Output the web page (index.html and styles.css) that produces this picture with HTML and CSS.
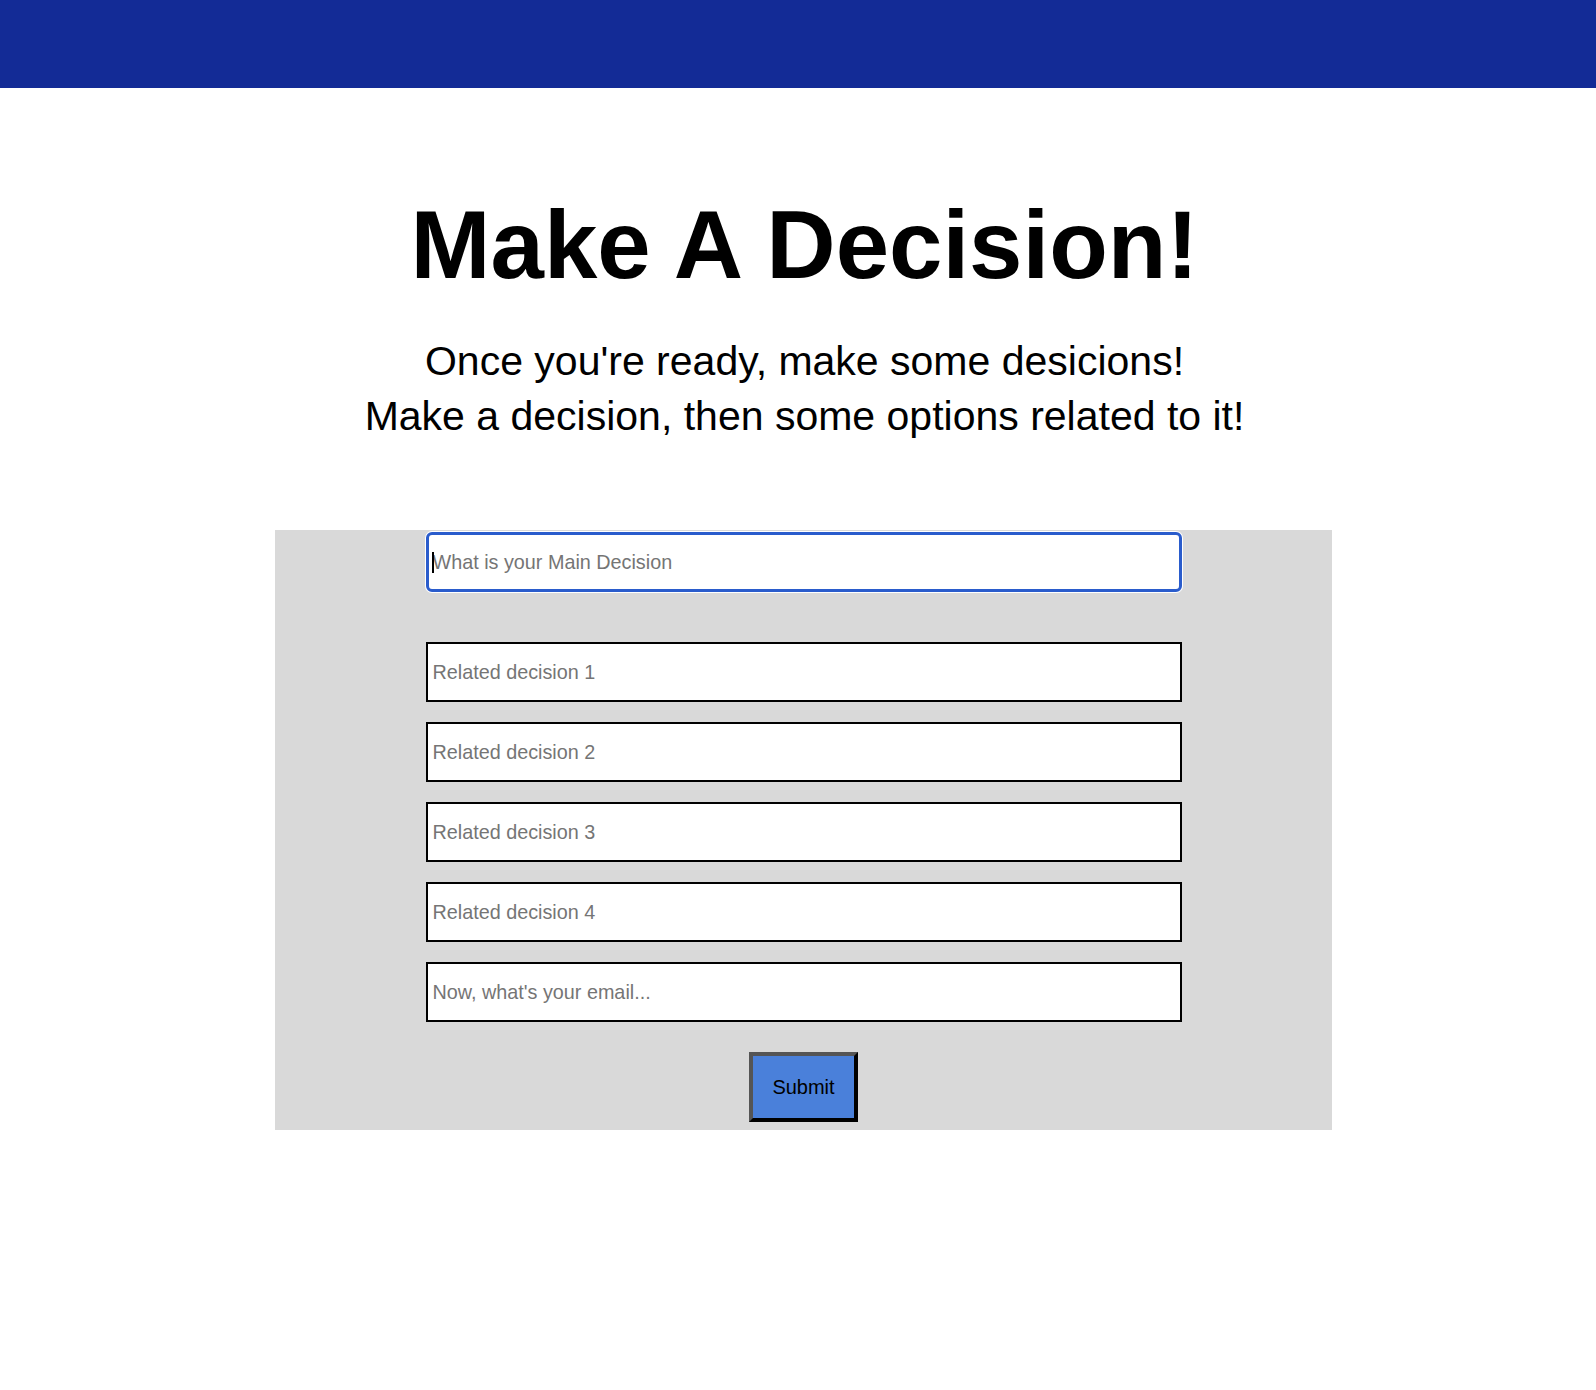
FILE: index.html
```html
<!DOCTYPE html>
<html lang="en">
<head>
<meta charset="utf-8">
<title>Make A Decision!</title>
<link rel="stylesheet" href="styles.css">
</head>
<body>
<header class="topbar"></header>
<main class="page">
  <h1 class="title">Make A Decision!</h1>
  <p class="lead">Once you're ready, make some desicions!<br>Make a decision, then some options related to it!</p>
  <form class="panel">
    <div class="field-wrap">
      <input class="field field-main" type="text" placeholder="What is your Main Decision">
    </div>
    <input class="field" type="text" placeholder="Related decision 1">
    <input class="field" type="text" placeholder="Related decision 2">
    <input class="field" type="text" placeholder="Related decision 3">
    <input class="field" type="text" placeholder="Related decision 4">
    <input class="field field-email" type="email" placeholder="Now, what's your email...">
    <button class="submit" type="button">Submit</button>
  </form>
</main>
</body>
</html>
```
FILE: styles.css
```css
html, body {
  margin: 0;
  padding: 0;
  background: #ffffff;
}

body {
  font-family: "Liberation Sans", Arial, Helvetica, sans-serif;
  color: #000000;
}

.topbar {
  height: 88px;
  background: #132b96;
}

.page {
  padding-left: 13px;
  display: flex;
  flex-direction: column;
  align-items: center;
}

.title {
  margin: 102px 0 0;
  font-size: 96px;
  line-height: 110px;
  font-weight: 700;
  text-align: center;
}

.lead {
  margin: 34px 0 0;
  font-size: 41px;
  line-height: 55px;
  font-weight: 400;
  text-align: center;
}

.panel {
  margin: 86px 2px 0 0;
  width: 1057px;
  box-sizing: border-box;
  padding: 2px 0 8px;
  background: #d9d9d9;
  display: flex;
  flex-direction: column;
  align-items: center;
}

.field-wrap {
  position: relative;
  margin-bottom: 50px;
}

.field-wrap::after {
  content: "";
  position: absolute;
  left: 6px;
  top: 20px;
  width: 2px;
  height: 21px;
  background: #000000;
}

.field {
  display: block;
  width: 756px;
  height: 60px;
  box-sizing: border-box;
  margin: 0 0 20px;
  padding: 0 5px;
  border: 2px solid #000000;
  border-radius: 0;
  background: #ffffff;
  font-family: "Liberation Sans", Arial, Helvetica, sans-serif;
  font-size: 19.8px;
  color: #000000;
  outline: none;
}

.field::placeholder {
  color: #757575;
  opacity: 1;
}

.field-main {
  margin: 0;
  padding: 0 4px;
  border: 3px solid #2a5ccc;
  border-radius: 6px;
  box-shadow: 0 0 0 1px #ffffff;
}

.field-email {
  margin-bottom: 30px;
}

.submit {
  width: 109px;
  height: 70px;
  box-sizing: border-box;
  padding: 0;
  background: #4a80da;
  border-style: solid;
  border-width: 4px;
  border-color: #555555 #000000 #000000 #555555;
  font-family: "Liberation Sans", Arial, Helvetica, sans-serif;
  font-size: 20px;
  color: #000000;
  cursor: pointer;
}
```
